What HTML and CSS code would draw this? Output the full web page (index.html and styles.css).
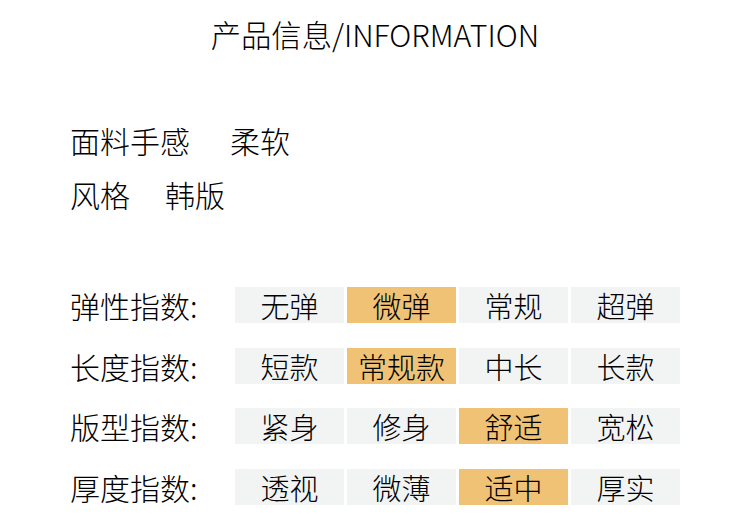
FILE: index.html
```html
<!DOCTYPE html>
<html lang="zh-CN">
<head>
<meta charset="utf-8">
<title>产品信息</title>
<link rel="stylesheet" href="styles.css">
</head>
<body>
<div class="page">
  <h1 class="title">产品信息/INFORMATION</h1>
  <div class="info">
    <div class="info-line"><span class="info-key">面料手感</span><span class="info-val val-1">柔软</span></div>
    <div class="info-line"><span class="info-key">风格</span><span class="info-val val-2">韩版</span></div>
  </div>
  <div class="scales">
    <div class="scale-row">
      <div class="scale-label">弹性指数:</div>
      <div class="opt">无弹</div>
      <div class="opt on">微弹</div>
      <div class="opt">常规</div>
      <div class="opt">超弹</div>
    </div>
    <div class="scale-row">
      <div class="scale-label">长度指数:</div>
      <div class="opt">短款</div>
      <div class="opt on">常规款</div>
      <div class="opt">中长</div>
      <div class="opt">长款</div>
    </div>
    <div class="scale-row">
      <div class="scale-label">版型指数:</div>
      <div class="opt">紧身</div>
      <div class="opt">修身</div>
      <div class="opt on">舒适</div>
      <div class="opt">宽松</div>
    </div>
    <div class="scale-row">
      <div class="scale-label">厚度指数:</div>
      <div class="opt">透视</div>
      <div class="opt">微薄</div>
      <div class="opt on">适中</div>
      <div class="opt">厚实</div>
    </div>
  </div>
</div>
</body>
</html>
```

FILE: styles.css
```css
html, body {
  margin: 0;
  padding: 0;
  background: #ffffff;
}
body {
  font-family: "Noto Sans CJK SC", "Noto Sans", sans-serif;
  color: #000000;
  font-weight: 300;
}
.page {
  width: 750px;
  height: 532px;
  overflow: hidden;
}
.title {
  margin: 0;
  padding-top: 13px;
  font-size: 30.3px;
  line-height: 42px;
  font-weight: 300;
  text-align: center;
}
.info {
  margin-top: 58px;
  padding-left: 70px;
}
.info-line {
  font-size: 30px;
  line-height: 54px;
  display: flex;
}
.val-1 { margin-left: 40px; }
.val-2 { margin-left: 35px; }
.scales {
  margin-top: 66px;
  padding-left: 70px;
  display: flex;
  flex-direction: column;
  gap: 24.5px;
}
.scale-row {
  display: grid;
  grid-template-columns: 162px 109px 109px 109px 109px;
  column-gap: 3px;
  height: 36px;
  align-items: stretch;
}
.scale-label {
  font-size: 30px;
  line-height: 36px;
}
.opt {
  background: #f2f4f4;
  font-size: 29px;
  line-height: 36px;
  text-align: center;
}
.opt.on {
  background: #efc276;
}
```
